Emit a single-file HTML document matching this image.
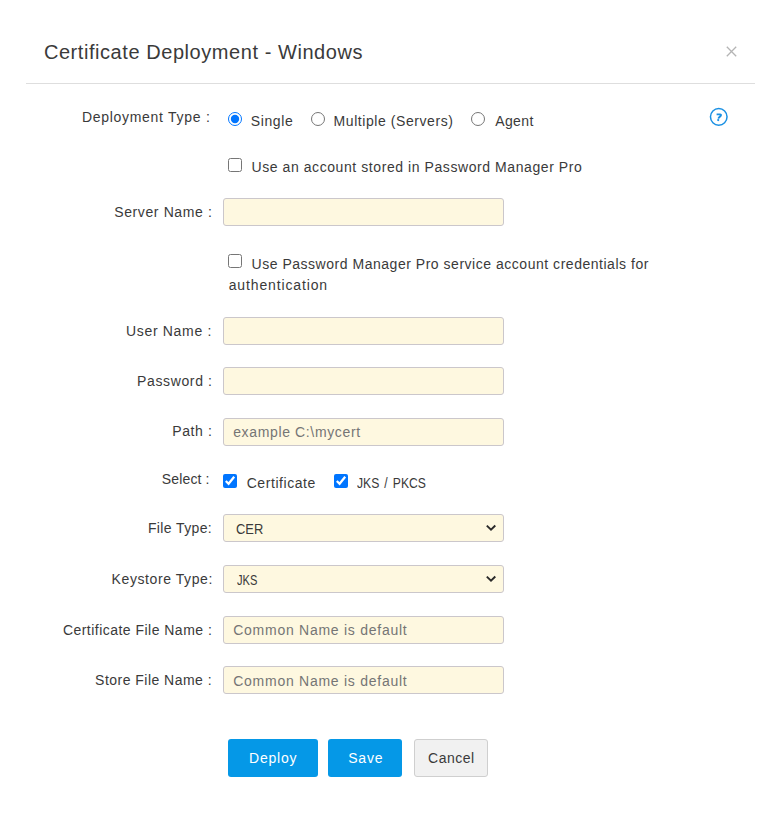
<!DOCTYPE html>
<html><head><meta charset="utf-8">
<style>
*{box-sizing:border-box;margin:0;padding:0}
html,body{width:783px;height:820px;background:#fff;overflow:hidden}
body{font-family:"Liberation Sans",sans-serif;color:#333;font-size:14px;position:relative}
.a{position:absolute;white-space:nowrap;line-height:1}
.hr{left:26px;top:83px;width:729px;height:1px;background:#dedede}
.inp{left:223px;width:281px;height:28px;background:#fef8e0;border:1px solid #cbc7cb;border-radius:3px}
input.n{position:absolute;margin:0;width:13.7px;height:13.7px;accent-color:#0075ff}
.btn{height:38px;border-radius:3px}
.blue{background:#0598e7}
.gray{background:#f1f1f1;border:1px solid #cfcfcf}
</style></head><body>
<svg class="a" style="left:726px;top:46px" width="11" height="11" viewBox="0 0 11 11"><path d="M0.8 0.8L10.2 10.2M10.2 0.8L0.8 10.2" stroke="#b4b4b4" stroke-width="1.3" fill="none"/></svg>
<div class="a hr"></div>
<svg class="a" style="left:709px;top:107px" width="20" height="20" viewBox="0 0 20 20"><circle cx="9.75" cy="9.85" r="8.3" fill="none" stroke="#1a90e3" stroke-width="1.5"/><path d="M7.6 7.3H11C11.9 7.3 12.3 8.1 11.8 8.8L10.3 10.2C9.9 10.6 9.6 11.1 9.3 11.7" fill="none" stroke="#1a90e3" stroke-width="1.85" stroke-linejoin="round"/><circle cx="9.2" cy="13.1" r="1.1" fill="#1a90e3"/></svg>

<input class="n" type="radio" name="dt" checked style="left:228px;top:112px">
<input class="n" type="radio" name="dt" style="left:311px;top:112px">
<input class="n" type="radio" name="dt" style="left:471px;top:112px">
<input class="n" type="checkbox" style="left:228px;top:158px">
<div class="a inp" style="top:198px"></div>
<input class="n" type="checkbox" style="left:228px;top:254px">
<div class="a inp" style="top:317px;height:28px"></div>
<div class="a inp" style="top:367px;height:28px"></div>
<div class="a inp" style="top:418px;height:28px"></div>
<input class="n" type="checkbox" checked style="left:223px;top:474px">
<input class="n" type="checkbox" checked style="left:334px;top:474px">
<div class="a inp" style="top:514px;height:28px"></div>
<svg class="a" style="left:486px;top:524px" width="11" height="8" viewBox="0 0 11 8"><path d="M0.8 1.6L5.0 5.7L9.3 1.5" fill="none" stroke="#2a2a2a" stroke-width="1.9"/></svg>
<div class="a inp" style="top:565px;height:28px"></div>
<svg class="a" style="left:486px;top:575px" width="11" height="8" viewBox="0 0 11 8"><path d="M0.8 1.6L5.0 5.7L9.3 1.5" fill="none" stroke="#2a2a2a" stroke-width="1.9"/></svg>
<div class="a inp" style="top:616px;height:28px"></div>
<div class="a inp" style="top:666px;height:28px"></div>
<div class="a btn blue" style="left:228px;top:739px;width:90px"></div>
<div class="a btn blue" style="left:328px;top:739px;width:74px"></div>
<div class="a btn gray" style="left:414px;top:739px;width:74px"></div>
<div class="a" id="t_title" style="left:43.90px;top:41.71px;font-size:20px;letter-spacing:0.561px;color:#3a3a3a">Certificate Deployment - Windows</div>
<div class="a" id="l_dep" style="left:81.90px;top:109.70px;font-size:14px;letter-spacing:0.713px;color:#3a3a3a">Deployment Type :</div>
<div class="a" id="r_single" style="left:250.70px;top:113.50px;font-size:14px;letter-spacing:0.640px;color:#3a3a3a">Single</div>
<div class="a" id="r_multi" style="left:333.60px;top:113.50px;font-size:14px;letter-spacing:0.565px;color:#3a3a3a">Multiple (Servers)</div>
<div class="a" id="r_agent" style="left:495.20px;top:113.50px;font-size:14px;letter-spacing:0.400px;color:#3a3a3a">Agent</div>
<div class="a" id="c_acct" style="left:251.50px;top:159.70px;font-size:14px;letter-spacing:0.573px;color:#3a3a3a">Use an account stored in Password Manager Pro</div>
<div class="a" id="l_server" style="left:114.20px;top:204.91px;font-size:14px;letter-spacing:0.617px;color:#3a3a3a">Server Name :</div>
<div class="a" id="c_svc" style="left:251.50px;top:256.81px;font-size:14px;letter-spacing:0.524px;color:#3a3a3a">Use Password Manager Pro service account credentials for</div>
<div class="a" id="c_auth" style="left:228.70px;top:278.20px;font-size:14px;letter-spacing:0.862px;color:#3a3a3a">authentication</div>
<div class="a" id="l_user" style="left:126.10px;top:324.00px;font-size:14px;letter-spacing:0.660px;color:#3a3a3a">User Name :</div>
<div class="a" id="l_pass" style="left:137.10px;top:373.91px;font-size:14px;letter-spacing:0.622px;color:#3a3a3a">Password :</div>
<div class="a" id="l_path" style="left:172.20px;top:424.41px;font-size:14px;letter-spacing:0.640px;color:#3a3a3a">Path :</div>
<div class="a" id="p_path" style="left:233.20px;top:425.20px;font-size:14px;letter-spacing:0.637px;color:#757575">example C:\mycert</div>
<div class="a" id="l_sel" style="left:161.80px;top:472.10px;font-size:14px;letter-spacing:0.143px;color:#3a3a3a">Select :</div>
<div class="a" id="c_cert" style="left:246.70px;top:475.70px;font-size:14px;letter-spacing:0.560px;color:#3a3a3a">Certificate</div>
<div class="a" id="c_jks" style="left:357.10px;top:475.70px;font-size:14px;transform:scaleX(0.8664);transform-origin:0 0;word-spacing:2px;color:#3a3a3a">JKS / PKCS</div>
<div class="a" id="l_ftype" style="left:147.90px;top:521.10px;font-size:14px;letter-spacing:0.378px;color:#3a3a3a">File Type:</div>
<div class="a" id="v_cer" style="left:236.30px;top:521.81px;font-size:14px;transform:scaleX(0.9218);transform-origin:0 0;word-spacing:0px;color:#3a3a3a">CER</div>
<div class="a" id="l_ktype" style="left:111.60px;top:572.10px;font-size:14px;letter-spacing:0.585px;color:#3a3a3a">Keystore Type:</div>
<div class="a" id="v_jks" style="left:237.10px;top:573.11px;font-size:14px;transform:scaleX(0.7929);transform-origin:0 0;word-spacing:0px;color:#3a3a3a">JKS</div>
<div class="a" id="l_cfn" style="left:62.90px;top:623.00px;font-size:14px;letter-spacing:0.473px;color:#3a3a3a">Certificate File Name :</div>
<div class="a" id="p_cfn" style="left:233.20px;top:623.10px;font-size:14px;letter-spacing:0.743px;color:#757575">Common Name is default</div>
<div class="a" id="l_sfn" style="left:95.10px;top:673.00px;font-size:14px;letter-spacing:0.475px;color:#3a3a3a">Store File Name :</div>
<div class="a" id="p_sfn" style="left:233.20px;top:674.00px;font-size:14px;letter-spacing:0.743px;color:#757575">Common Name is default</div>
<div class="a" id="b_dep" style="left:249.10px;top:751.00px;font-size:14px;letter-spacing:0.760px;color:#fff">Deploy</div>
<div class="a" id="b_save" style="left:348.20px;top:751.00px;font-size:14px;letter-spacing:0.800px;color:#fff">Save</div>
<div class="a" id="b_can" style="left:428.10px;top:751.00px;font-size:14px;letter-spacing:0.480px;color:#3a3a3a">Cancel</div>
</body></html>
